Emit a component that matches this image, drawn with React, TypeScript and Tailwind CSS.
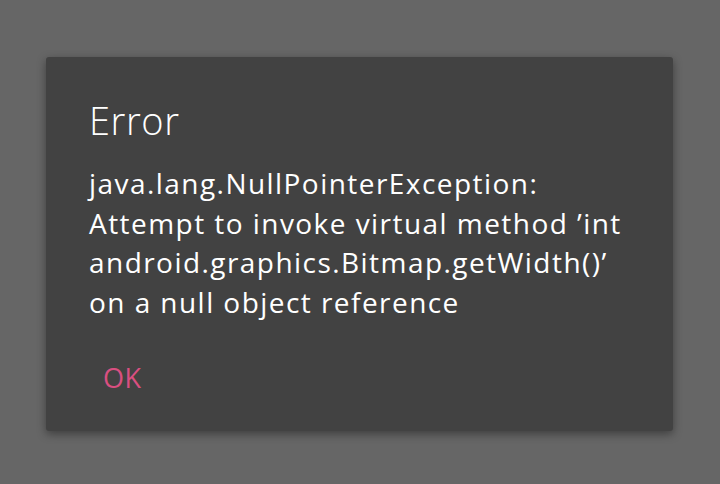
import React from "react";

export default function App() {
  const font = { fontFamily: "'Open Sans', Lato, sans-serif" };
  return (
    <div className="w-[720px] h-[484px] bg-[#666666] pt-[57px] pl-[46px]" style={font}>
      <div className="w-[627px] h-[374px] bg-[#424242] rounded-[3px] shadow-[0_3px_10px_rgba(0,0,0,0.4)] pl-[43px] pr-[10px] pt-[37px] flex flex-col">
        <div className="text-[38px] leading-[52px] font-light tracking-[0.6px] text-white">Error</div>
        <div className="mt-[18px] text-[28px] leading-[39.5px] font-normal tracking-[1.45px] text-white whitespace-nowrap">
          <div>java.lang.NullPointerException:</div>
          <div>Attempt to invoke virtual method ’int</div>
          <div>android.graphics.Bitmap.getWidth()’</div>
          <div>on a null object reference</div>
        </div>
        <div className="mt-[36px] ml-[14px] text-[27px] leading-[39px] font-normal tracking-[0.5px] text-[#d94f80]">OK</div>
      </div>
    </div>
  );
}
